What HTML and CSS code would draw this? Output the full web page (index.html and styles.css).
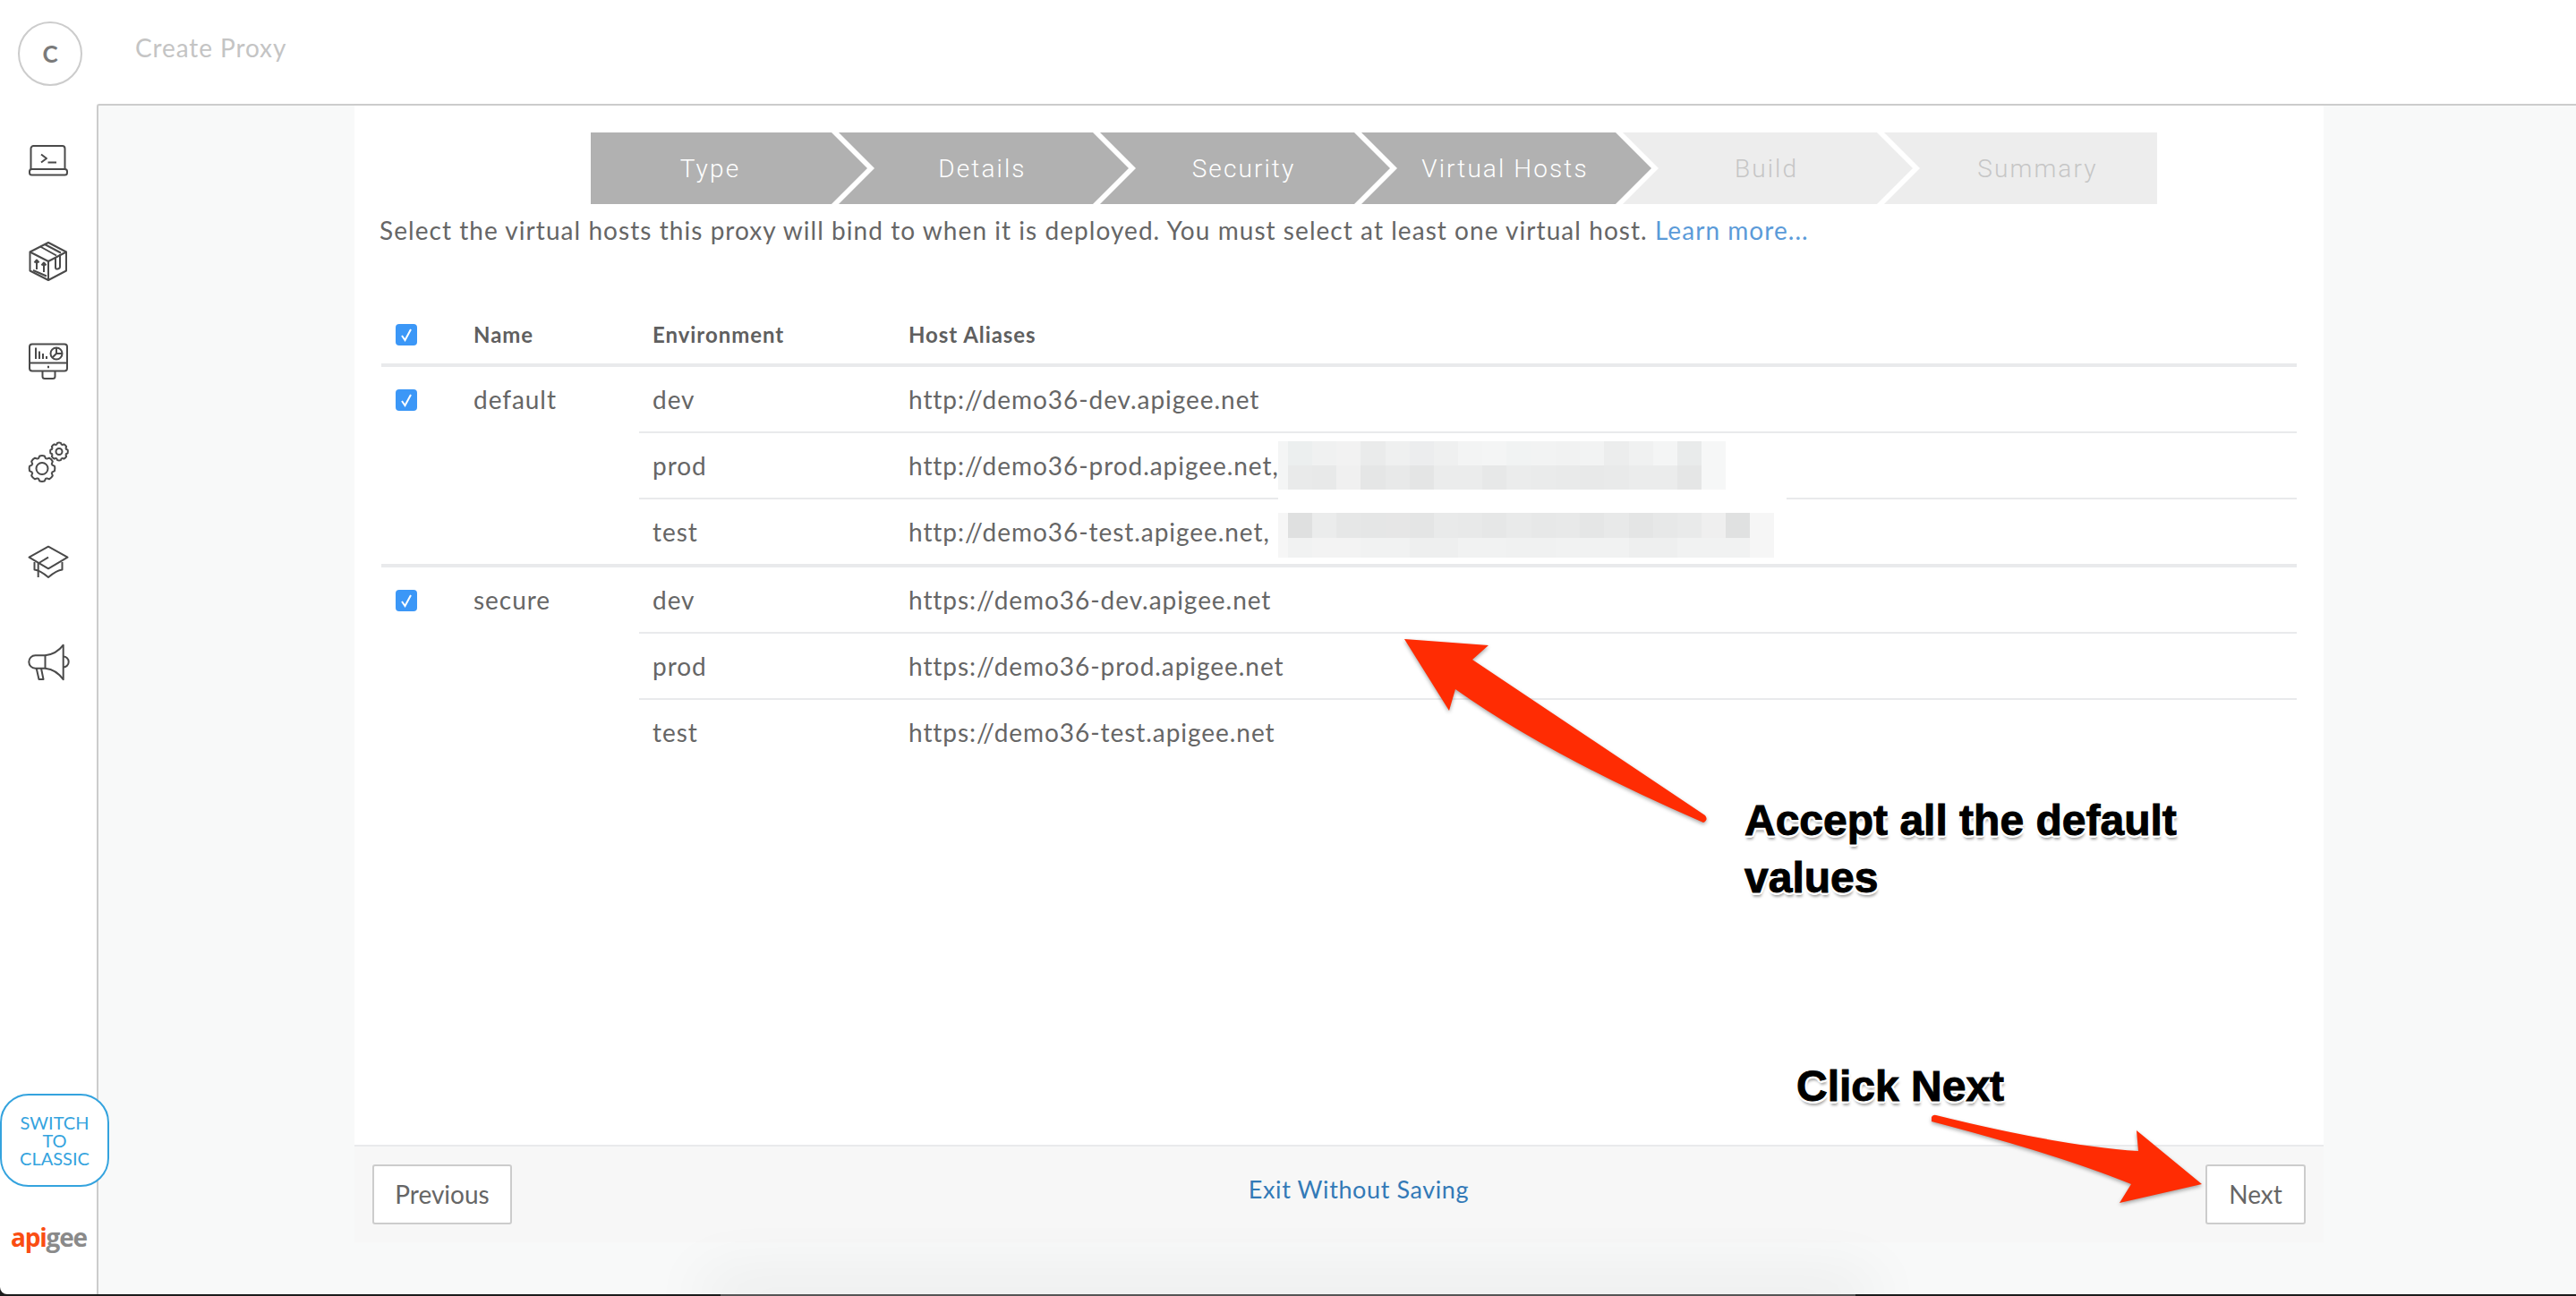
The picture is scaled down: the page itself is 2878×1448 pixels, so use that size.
FILE: index.html
```html
<!DOCTYPE html>
<html lang="en">
<head>
    <meta charset="UTF-8">
    <meta name="viewport" content="width=device-width, initial-scale=1.0">
    <title>Create Proxy</title>
    <link rel="stylesheet" href="styles.css">
</head>
<body>

    <svg class="icon-defs" width="0" height="0">
        <defs>
            <path id="tooth-big" d="M-4.4 -10.6 L-2.7 -14 Q0 -14.8 2.7 -14 L4.4 -10.6"/>
            <path id="tooth-small" d="M-3 -7.3 L-1.9 -9.6 Q0 -10.2 1.9 -9.6 L3 -7.3"/>
            <path id="check" d="M7 13 L10.5 18 L17 6"/>
        </defs>
    </svg>

    <div class="app">
        <aside class="sidebar">
            <div class="avatar">C</div>
            <nav class="nav-icons">
                <a class="nav-item">
                    <svg class="icon" viewBox="0 0 44 44">
                        <path d="M2.5 31V8a3 3 0 0 1 3-3h32a3 3 0 0 1 3 3v23"/>
                        <rect x="1" y="31" width="42" height="6.5" rx="2.5"/>
                        <path d="M14 14.5l6 4.5-6 4.5M21.5 23.5h9.5"/>
                    </svg>
                </a>
                <a class="nav-item">
                    <svg class="icon" viewBox="0 0 44 44">
                        <path d="M22 1L42 11.500V32.500L22 43L1.500 32.500V11.500Z"/>
                        <path d="M1.500 11.500L22 22L42 11.500M22 22V43"/>
                        <path d="M13 5.500L31 15.500M18 3L36 12.500"/>
                        <path d="M30 17V29q0 2 2.500 1.500t2.500-2.500V14"/>
                        <path d="M9 31V21M6.500 23.500L9 20.500l2.500 3M17 34V24M14.500 26.500L17 23.500l2.500 3M5 32l15 6.500"/>
                    </svg>
                </a>
                <a class="nav-item">
                    <svg class="icon" viewBox="0 0 44 44">
                        <rect x="1" y="2.500" width="42" height="30" rx="3"/>
                        <path d="M1 23.500H43M15.500 33v5.500q0 2.500 2.500 2.500h9q2.500 0 2.500-2.500V33"/>
                        <path class="thick" d="M21 28h2"/>
                        <path d="M8 6.500V19M12 10.500V19M16 13V19M20 16V19"/>
                        <circle cx="31" cy="13" r="6.500"/>
                        <path d="M31 6.500v6.500h6.500M31 13l-4.500 4.500"/>
                    </svg>
                </a>
                <a class="nav-item">
                    <svg class="icon" viewBox="0 0 44 44">
                        <g transform="translate(15 29.500)">
                            <use href="#tooth-big"/>
                            <use href="#tooth-big" transform="rotate(45)"/>
                            <use href="#tooth-big" transform="rotate(90)"/>
                            <use href="#tooth-big" transform="rotate(135)"/>
                            <use href="#tooth-big" transform="rotate(180)"/>
                            <use href="#tooth-big" transform="rotate(225)"/>
                            <use href="#tooth-big" transform="rotate(270)"/>
                            <use href="#tooth-big" transform="rotate(315)"/>
                            <circle r="6.500"/>
                        </g>
                        <g transform="translate(34 10.500)">
                            <use href="#tooth-small"/>
                            <use href="#tooth-small" transform="rotate(45)"/>
                            <use href="#tooth-small" transform="rotate(90)"/>
                            <use href="#tooth-small" transform="rotate(135)"/>
                            <use href="#tooth-small" transform="rotate(180)"/>
                            <use href="#tooth-small" transform="rotate(225)"/>
                            <use href="#tooth-small" transform="rotate(270)"/>
                            <use href="#tooth-small" transform="rotate(315)"/>
                            <circle r="3.500"/>
                        </g>
                    </svg>
                </a>
                <a class="nav-item">
                    <svg class="icon" viewBox="0 0 44 44">
                        <path d="M22 4.700L43.500 16.700L22 29.300L.5 16.700Z"/>
                        <path d="M6.500 22v8.500q6 .5 15.500 8.500q9.500-8 15.500-8.500V22"/>
                        <path d="M22 16.700L10.700 23.500V39"/>
                    </svg>
                </a>
                <a class="nav-item">
                    <svg class="icon" viewBox="0 0 44 44">
                        <path d="M18.500 14.300H7.500a7.200 7.200 0 0 0 0 14.400h11Z"/>
                        <path d="M18.500 14.300Q31 13 38.700 2.700V41.300Q31 30 18.500 28.700"/>
                        <path d="M38.700 15.500a6 6 0 0 1 0 12"/>
                        <path d="M8.700 28.700L11.500 41h5L14 28.700"/>
                    </svg>
                </a>
            </nav>
            <button class="switch-btn">SWITCH<br>TO<br>CLASSIC</button>
            <div class="apigee-logo"><span class="logo-api">api</span><span class="logo-gee">gee</span></div>
        </aside>

        <div class="main">
            <header class="topbar">Create Proxy</header>
            <div class="content">
                <section class="panel">
                    <div class="steps">
                        <div class="step step-first">Type</div>
                        <div class="step">Details</div>
                        <div class="step">Security</div>
                        <div class="step">Virtual Hosts</div>
                        <div class="step step-todo">Build</div>
                        <div class="step step-todo step-last">Summary</div>
                    </div>

                    <p class="intro">Select the virtual hosts this proxy will bind to when it is deployed. You must select at least one virtual host. <a class="link">Learn more...</a></p>

                    <div class="hosts">
                        <div class="hosts-head">
                            <div class="col-check"><span class="checkbox"><svg viewBox="0 0 24 24"><use href="#check"/></svg></span></div>
                            <div class="col-name">Name</div>
                            <div class="col-env">Environment</div>
                            <div>Host Aliases</div>
                        </div>

                        <div class="group">
                            <div class="col-check"><span class="checkbox"><svg viewBox="0 0 24 24"><use href="#check"/></svg></span></div>
                            <div class="col-name group-name">default</div>
                            <div class="group-rows">
                                <div class="row"><div class="col-env">dev</div><div>http://demo36-dev.apigee.net</div></div>
                                <div class="row"><div class="col-env">prod</div><div>http://demo36-prod.apigee.net,</div></div>
                                <div class="row"><div class="col-env">test</div><div>http://demo36-test.apigee.net,</div></div>
                            </div>
                        </div>

                        <div class="group group-plain">
                            <div class="col-check"><span class="checkbox"><svg viewBox="0 0 24 24"><use href="#check"/></svg></span></div>
                            <div class="col-name group-name">secure</div>
                            <div class="group-rows">
                                <div class="row"><div class="col-env">dev</div><div>https://demo36-dev.apigee.net</div></div>
                                <div class="row"><div class="col-env">prod</div><div>https://demo36-prod.apigee.net</div></div>
                                <div class="row"><div class="col-env">test</div><div>https://demo36-test.apigee.net</div></div>
                            </div>
                        </div>
                    </div>

                    <footer class="panel-footer">
                        <button class="btn btn-prev">Previous</button>
                        <a class="exit-link">Exit Without Saving</a>
                        <button class="btn btn-next">Next</button>
                    </footer>
                </section>
            </div>
        </div>
    </div>

    <div class="dock-shadow"></div>

    <!-- screenshot markup: blurred hosts and red arrows -->
    <svg class="markup" viewBox="0 0 2878 1448">
        <g shape-rendering="crispEdges">
            <rect x="1428" y="547" width="568" height="26" fill="#ffffff"/>
            <rect x="1428" y="493" width="500" height="54" fill="#f4f5f5"/>
            <rect x="1439" y="493" width="27" height="27" fill="#ecefef"/>
            <rect x="1466" y="493" width="27" height="27" fill="#f0f1f1"/>
            <rect x="1493" y="493" width="27" height="27" fill="#f2f2f2"/>
            <rect x="1520" y="493" width="28" height="27" fill="#eaebeb"/>
            <rect x="1548" y="493" width="27" height="27" fill="#eff0f0"/>
            <rect x="1575" y="493" width="27" height="27" fill="#ecedee"/>
            <rect x="1602" y="493" width="27" height="27" fill="#eff0f0"/>
            <rect x="1629" y="493" width="27" height="27" fill="#f3f4f4"/>
            <rect x="1656" y="493" width="27" height="27" fill="#f4f5f5"/>
            <rect x="1683" y="493" width="28" height="27" fill="#f1f3f3"/>
            <rect x="1711" y="493" width="27" height="27" fill="#f2f3f3"/>
            <rect x="1738" y="493" width="27" height="27" fill="#f1f2f2"/>
            <rect x="1765" y="493" width="27" height="27" fill="#f2f3f3"/>
            <rect x="1792" y="493" width="28" height="27" fill="#eceded"/>
            <rect x="1820" y="493" width="27" height="27" fill="#f0f1f1"/>
            <rect x="1847" y="493" width="27" height="27" fill="#f4f5f5"/>
            <rect x="1874" y="493" width="27" height="27" fill="#e9ebeb"/>
            <rect x="1901" y="493" width="27" height="54" fill="#f6f7f7"/>
            <rect x="1439" y="520" width="27" height="27" fill="#e9eaea"/>
            <rect x="1466" y="520" width="27" height="27" fill="#e8e9e9"/>
            <rect x="1493" y="520" width="27" height="27" fill="#f0f0f0"/>
            <rect x="1520" y="520" width="28" height="27" fill="#e5e6e6"/>
            <rect x="1548" y="520" width="27" height="27" fill="#e8e9e9"/>
            <rect x="1575" y="520" width="27" height="27" fill="#e4e5e5"/>
            <rect x="1602" y="520" width="27" height="27" fill="#ebecec"/>
            <rect x="1629" y="520" width="27" height="27" fill="#ebecec"/>
            <rect x="1656" y="520" width="27" height="27" fill="#e7e8e8"/>
            <rect x="1683" y="520" width="28" height="27" fill="#ebecec"/>
            <rect x="1711" y="520" width="27" height="27" fill="#eaebeb"/>
            <rect x="1738" y="520" width="27" height="27" fill="#e9eaea"/>
            <rect x="1765" y="520" width="27" height="27" fill="#e8e9e9"/>
            <rect x="1792" y="520" width="28" height="27" fill="#e9eaea"/>
            <rect x="1820" y="520" width="27" height="27" fill="#ebecec"/>
            <rect x="1847" y="520" width="27" height="27" fill="#ebecec"/>
            <rect x="1874" y="520" width="27" height="27" fill="#e5e6e6"/>

            <rect x="1428" y="573" width="554" height="50" fill="#f6f6f6"/>
            <rect x="1439" y="573" width="27" height="28" fill="#dfe0e0"/>
            <rect x="1466" y="573" width="27" height="28" fill="#ebecec"/>
            <rect x="1493" y="573" width="27" height="28" fill="#e6e7e7"/>
            <rect x="1520" y="573" width="28" height="28" fill="#e5e6e6"/>
            <rect x="1548" y="573" width="27" height="28" fill="#e6e6e6"/>
            <rect x="1575" y="573" width="27" height="28" fill="#e4e5e5"/>
            <rect x="1602" y="573" width="27" height="28" fill="#e9eaea"/>
            <rect x="1629" y="573" width="27" height="28" fill="#e8e9e9"/>
            <rect x="1656" y="573" width="27" height="28" fill="#e6e7e7"/>
            <rect x="1683" y="573" width="28" height="28" fill="#e9eaea"/>
            <rect x="1711" y="573" width="27" height="28" fill="#e7e8e8"/>
            <rect x="1738" y="573" width="27" height="28" fill="#e8e9e9"/>
            <rect x="1765" y="573" width="27" height="28" fill="#e5e6e6"/>
            <rect x="1792" y="573" width="28" height="28" fill="#e8e9e9"/>
            <rect x="1820" y="573" width="27" height="28" fill="#e4e5e5"/>
            <rect x="1847" y="573" width="27" height="28" fill="#e7e8e8"/>
            <rect x="1874" y="573" width="27" height="28" fill="#e9eaea"/>
            <rect x="1901" y="573" width="27" height="28" fill="#efefef"/>
            <rect x="1928" y="573" width="27" height="28" fill="#e0e1e1"/>
            <rect x="1439" y="601" width="516" height="22" fill="#f1f2f2"/>
            <rect x="1466" y="601" width="54" height="22" fill="#f3f3f3"/>
            <rect x="1575" y="601" width="54" height="22" fill="#eeefef"/>
            <rect x="1683" y="601" width="55" height="22" fill="#f0f1f1"/>
            <rect x="1820" y="601" width="54" height="22" fill="#eeefef"/>
        </g>

        <path class="arrow" d="M1569 714 L1663 721 L1645 737 L1905 911 Q1909 916 1903 919 Q1730 844 1626 770 L1619 794 Z"/>
        <path class="arrow" d="M2158 1248 Q2160 1245 2163 1246 Q2300 1280 2389 1286 L2387 1263 L2460 1323 L2368 1344 L2381 1323 Q2300 1290 2158 1253 Z"/>
    </svg>

    <div class="note note-accept">Accept all the default<br>values</div>
    <div class="note note-next">Click Next</div>

</body>
</html>
```

FILE: styles.css
```css
* {
    box-sizing: border-box;
}
html, body {
    margin: 0;
    height: 100%;
}
body {
    background-color: #1c1c1c;
    font-family: Lato, "Open Sans", sans-serif;
    color: #666;
    overflow: hidden;
}
.icon-defs {
    position: absolute;
}
#tooth-big, #tooth-small {
    fill: none;
}
.app {
    display: flex;
    height: 1446px;
    background-color: #fff;
    border-bottom-left-radius: 8px;
    overflow: hidden;
}

/* sidebar */
.sidebar {
    position: relative;
    z-index: 2;
    display: flex;
    flex-direction: column;
    flex: 0 0 108px;
    width: 108px;
}
.avatar {
    display: flex;
    align-items: center;
    justify-content: center;
    width: 72px;
    height: 72px;
    margin: 24px 0 28px 20px;
    border: 2px solid #ccc;
    border-radius: 50%;
    font-size: 26px;
    font-weight: 700;
    color: #7a7a7a;
}
.nav-item {
    display: flex;
    align-items: center;
    justify-content: flex-start;
    height: 112px;
    padding-left: 32px;
}
.icon {
    width: 44px;
    height: 44px;
    overflow: visible;
    fill: none;
    stroke: #4a4a4a;
    stroke-width: 2;
    stroke-linejoin: round;
}
.icon .thick {
    stroke-width: 2.5;
}
.switch-btn {
    position: absolute;
    left: 0;
    top: 1222px;
    width: 122px;
    height: 104px;
    padding: 0;
    border: 2px solid #34a3de;
    border-radius: 32px;
    background-color: #fff;
    font-family: Lato, sans-serif;
    font-size: 20px;
    line-height: 20px;
    color: #34a3de;
}
.apigee-logo {
    position: absolute;
    left: 12px;
    top: 1362px;
    font-family: "Open Sans", sans-serif;
    font-size: 28px;
    font-weight: 700;
    line-height: 40px;
    letter-spacing: -1.2px;
}
.logo-api {
    color: #fa4d12;
}
.logo-gee {
    color: #8a8a8a;
}

/* main column */
.main {
    display: flex;
    flex-direction: column;
    flex: 1;
    min-width: 0;
}
.topbar {
    flex: 0 0 116px;
    padding: 35px 0 0 43px;
    font-size: 28px;
    line-height: 36px;
    letter-spacing: .9px;
    color: #c4c4c4;
}
.content {
    display: flex;
    flex: 1;
    padding: 0 0 58px 286px;
    background-color: #f8f9f9;
    border-top: 2px solid #ccc;
    border-left: 2px solid #ccc;
    border-top-left-radius: 3px;
}
.panel {
    display: flex;
    flex-direction: column;
    width: 2200px;
    background-color: #fff;
}

/* wizard steps */
.steps {
    display: flex;
    margin: 30px 0 0 264px;
}
.step {
    flex: 0 0 324px;
    width: 324px;
    height: 80px;
    margin-left: -32px;
    padding-right: 3px;
    font-family: Roboto, sans-serif;
    font-weight: 300;
    font-size: 28px;
    line-height: 81px;
    letter-spacing: 2.1px;
    text-align: center;
    color: #fff;
    background-color: #b1b1b1;
    clip-path: polygon(0 0, calc(100% - 40px) 0, 100% 50%, calc(100% - 40px) 100%, 0 100%, 40px 50%);
}
.step-first {
    flex-basis: 309px;
    width: 309px;
    margin-left: 0;
    padding-right: 42px;
    clip-path: polygon(0 0, calc(100% - 40px) 0, 100% 50%, calc(100% - 40px) 100%, 0 100%);
}
.step-todo {
    color: #c6c6c6;
    background-color: #ededed;
}
.step-last {
    flex-basis: 305px;
    width: 305px;
    padding-right: 0;
    padding-left: 38px;
    clip-path: polygon(0 0, 100% 0, 100% 100%, 0 100%, 40px 50%);
}
.intro {
    margin: 11px 0 0 28px;
    font-size: 28px;
    line-height: 36px;
    letter-spacing: 1.05px;
}
.link {
    color: #5b9bd9;
}

/* virtual hosts table */
.hosts {
    margin: 0 30px;
    font-size: 28px;
    letter-spacing: .95px;
}
.hosts-head {
    display: flex;
    align-items: center;
    height: 69px;
    margin-top: 66px;
    border-bottom: 4px solid #e9eaec;
    font-size: 24px;
    font-weight: 700;
    color: #5f5f5f;
}
.col-check {
    display: flex;
    align-items: center;
    flex: 0 0 103px;
    padding-left: 16px;
}
.col-name {
    flex: 0 0 185px;
}
.col-env {
    flex: 0 0 301px;
    padding-left: 15px;
}
.checkbox {
    display: block;
    width: 24px;
    height: 24px;
    border-radius: 4px;
    background-color: #3b97f7;
}
.checkbox svg {
    display: block;
    fill: none;
    stroke: #fff;
    stroke-width: 2;
}
.group {
    display: flex;
    border-bottom: 4px solid #e9eaec;
}
.group-plain {
    border-bottom: none;
}
.group > .col-check {
    align-items: flex-start;
    padding-top: 25px;
}
.group-name {
    line-height: 72px;
}
.group-rows {
    flex: 1;
}
.row {
    display: flex;
    align-items: center;
    height: 74px;
    border-bottom: 2px solid #e9eaec;
}
.row:last-child {
    height: 72px;
    border-bottom: none;
}

/* footer */
.panel-footer {
    display: flex;
    align-items: center;
    justify-content: space-between;
    height: 109px;
    margin-top: auto;
    padding: 0 20px;
    background-color: #f7f7f7;
    border-top: 2px solid #e9eaec;
}
.btn {
    height: 67px;
    padding: 0 0 2px;
    border: 2px solid #ccc;
    border-radius: 3px;
    background-color: #fff;
    font-family: Lato, sans-serif;
    font-size: 28px;
    color: #666;
}
.btn-prev {
    width: 156px;
}
.btn-next {
    width: 112px;
}
.exit-link {
    margin-bottom: 13px;
    font-size: 27px;
    letter-spacing: .6px;
    color: #337ab7;
}

/* faint shadow of a window under the screenshot */
.dock-shadow {
    position: absolute;
    left: 805px;
    top: 1446px;
    width: 1268px;
    height: 2px;
    background-color: #555;
    box-shadow: 0 0 70px 20px rgba(0, 0, 0, .07);
}

/* red arrows and notes drawn on top of the screenshot */
.markup {
    position: absolute;
    left: 0;
    top: 0;
    width: 2878px;
    height: 1448px;
    pointer-events: none;
}
.arrow {
    fill: #ff2c03;
    filter: drop-shadow(0 2px 2px rgba(0, 0, 0, .35));
}
.note {
    position: absolute;
    font-family: "Liberation Sans", Arial, sans-serif;
    font-size: 48px;
    font-weight: 700;
    line-height: 64px;
    color: #000;
    -webkit-text-stroke: 1px #000;
    text-shadow: 3px 0 0 #fff, -3px 0 0 #fff, 0 3px 0 #fff, 0 -3px 0 #fff, 2px 2px 0 #fff, -2px 2px 0 #fff, 2px -2px 0 #fff, -2px -2px 0 #fff, 1px 5px 3px rgba(0, 0, 0, .35);
}
.note-accept {
    left: 1949px;
    top: 885px;
}
.note-next {
    left: 2007px;
    top: 1182px;
}
```
